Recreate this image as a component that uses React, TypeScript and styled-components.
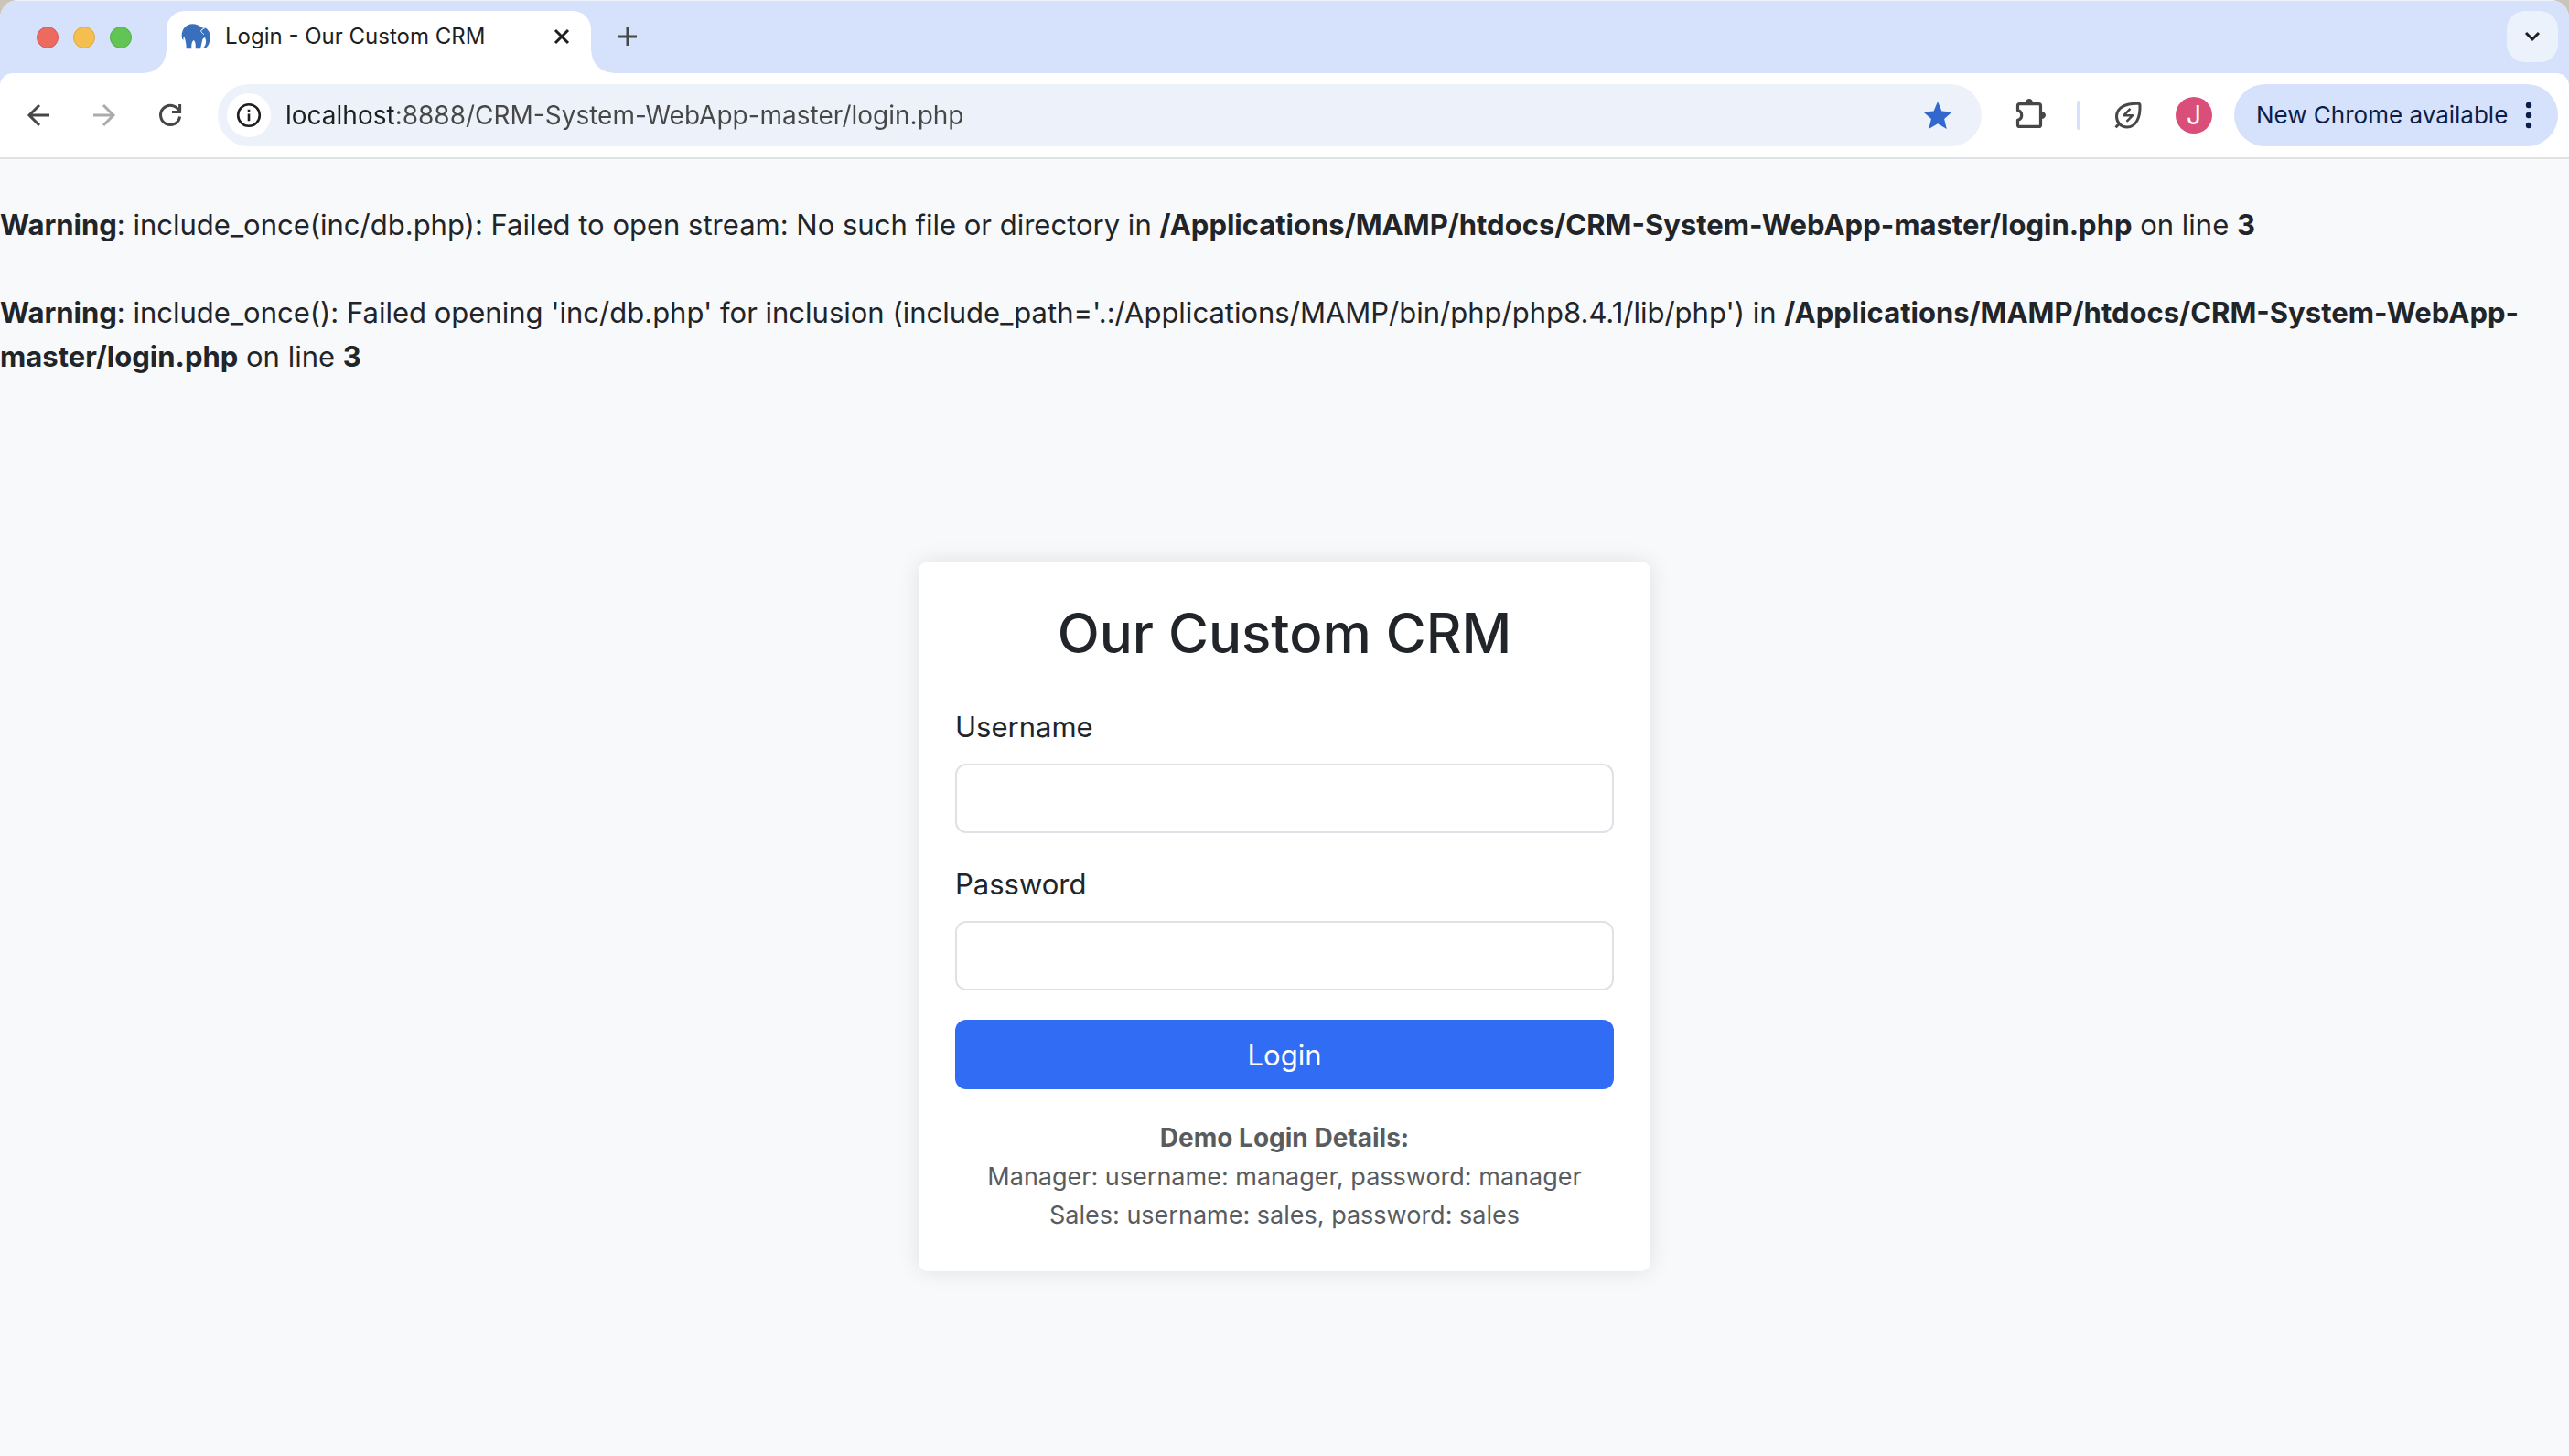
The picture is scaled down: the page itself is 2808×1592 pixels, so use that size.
import React from "react";
import styled, { createGlobalStyle } from "styled-components";

const GlobalStyle = createGlobalStyle`
  *, *::before, *::after { box-sizing: border-box; }
  html, body { margin: 0; background: #cbc5b9; }
  body, button, input { font-family: Inter, "Liberation Sans", sans-serif; }
  button { border: 0; padding: 0; background: none; cursor: pointer; }
`;

const Window = styled.div`
  display: flex;
  flex-direction: column;
  min-height: 100vh;
  overflow: hidden;
  border-radius: 20px 20px 0 0;
  background: #f8f9fb;
  color: #212529;
`;

const TabStrip = styled.header`
  display: flex;
  height: 80px;
  padding: 12px 12px 0 40px;
  background: #d6e1fc;
  box-shadow: inset 0 1px 0 #eef2fb;
`;

const WindowControls = styled.div`
  display: flex;
  align-items: center;
  gap: 16px;
  height: 58px;
  margin-right: 38px;
`;

const Light = styled.button<{ $fill: string; $edge: string }>`
  width: 24px;
  height: 24px;
  border: 1px solid ${(p) => p.$edge};
  border-radius: 50%;
  background: ${(p) => p.$fill};
`;

const Tab = styled.div`
  position: relative;
  display: flex;
  align-items: center;
  gap: 16px;
  width: 464px;
  padding: 0 16px 12px;
  border-radius: 20px 20px 0 0;
  background: #fff;

  &::before, &::after {
    content: "";
    position: absolute;
    bottom: 0;
    width: 24px;
    height: 24px;
  }
  &::before {
    right: 100%;
    background: radial-gradient(circle at 0 0, transparent 23px, #fff 24px);
  }
  &::after {
    left: 100%;
    background: radial-gradient(circle at 100% 0, transparent 23px, #fff 24px);
  }
`;

const TabTitle = styled.span`
  flex: 1;
  font-size: 24px;
  line-height: 32px;
  color: #1f1f1f;
  white-space: nowrap;
`;

const IconButton = styled.button<{ $size?: number; $color?: string }>`
  display: flex;
  flex: none;
  align-items: center;
  justify-content: center;
  width: ${(p) => p.$size ?? 56}px;
  height: ${(p) => p.$size ?? 56}px;
  color: ${(p) => p.$color ?? "#474747"};
`;

const NewTabButton = styled(IconButton)`
  margin-left: 12px;
`;

const TabSearchButton = styled(IconButton)`
  margin-left: auto;
  border-radius: 20px;
  background: #ebf2fc;
`;

const ToolbarBack = styled.div`
  background: #d6e1fc;
`;

const Toolbar = styled.nav`
  display: flex;
  align-items: center;
  gap: 24px;
  padding: 12px 12px 12px 14px;
  border-bottom: 2px solid #dfe2e2;
  border-radius: 14px 14px 0 0;
  background: #fff;
`;

const NavButtons = styled.div`
  display: flex;
  gap: 16px;
`;

const AddressBar = styled.div`
  display: flex;
  flex: 1;
  align-items: center;
  gap: 16px;
  height: 68px;
  padding: 0 20px 0 10px;
  border-radius: 34px;
  background: #edf2fa;
`;

const SiteInfo = styled(IconButton)`
  border-radius: 50%;
  background: #fff;
`;

const AddressInput = styled.input`
  flex: 1;
  min-width: 0;
  padding: 0;
  border: 0;
  outline: 0;
  font-size: 28px;
  line-height: 40px;
  color: #474747;
  background: linear-gradient(90deg, #1f1f1f 118px, #474747 118px);
  background-clip: text;
  -webkit-text-fill-color: transparent;
`;

const Divider = styled.span`
  width: 4px;
  height: 32px;
  border-radius: 2px;
  background: #d6e1fc;
`;

const Avatar = styled.button`
  width: 40px;
  height: 40px;
  border-radius: 50%;
  background: #d94f79;
  color: #fff;
  font-size: 28px;
  line-height: 40px;
`;

const UpdateButton = styled.button`
  display: flex;
  align-items: center;
  justify-content: space-between;
  width: 354px;
  height: 68px;
  padding: 0 28px 0 24px;
  border-radius: 34px;
  background: #d6e1fc;
  color: #0b1d49;
  font-size: 26px;
  line-height: 40px;
  white-space: nowrap;
`;

const Page = styled.main`
  flex: 1;
  padding-top: 48px;
  font-size: 31px;
  line-height: 48px;
`;

const Warning = styled.p`
  margin: 0 0 48px;
`;

const Warnings = styled.section`
  ${Warning}:last-child { margin-bottom: 0; }
`;

const Card = styled.form`
  width: 800px;
  margin: 200px auto;
  padding: 40px;
  border-radius: 10px;
  background: #fff;
  box-shadow: 0 0 24px rgba(0, 0, 0, 0.1);
`;

const CardTitle = styled.h1`
  margin: 0 0 40px;
  font-size: 60px;
  font-weight: 500;
  line-height: 77px;
  text-align: center;
`;

const Field = styled.div`
  display: flex;
  flex-direction: column;
  gap: 16px;
  margin-bottom: 32px;
`;

const FieldInput = styled.input`
  height: 76px;
  padding: 12px 24px;
  border: 2px solid #dee2e6;
  border-radius: 12px;
  background: #fff;
  color: inherit;
  font-size: 31px;
`;

const LoginButton = styled.button`
  display: block;
  width: 100%;
  height: 76px;
  border-radius: 12px;
  background: #316cf4;
  color: #fff;
  font-size: 31px;
`;

const DemoDetails = styled.p`
  margin: 32px 0 0;
  font-size: 27px;
  line-height: 42px;
  text-align: center;
  color: #595c5f;
`;

const DemoHeading = styled.b`
  font-size: 28px;
`;

const ElephantIcon = () => (
  <svg width="32" height="28" viewBox="0 0 96 84" aria-hidden="true">
    <path
      fill="#3a70bb"
      d="M4 52C-4 26 12 1 37 1c13 0 24 5 31 12 4 2 7 1 11-1 11 8 16 18 16 31 0 22-8 36-20 38-3-1-2-4 1-6 6-9 7-20 2-30-5 1-8 5-9 11l-6 26H47c1-14 0-24-6-28-6 4-8 14-7 28H17c0-14-2-24-6-37-1-2-2-3-3-1-1 3-1 6 0 9-2 0-4-2-4-2z"
    />
    <path d="M82 10c-6 6-13 8-16 11-3 4 2 9 9 14" fill="none" stroke="#fff" strokeWidth="3" />
  </svg>
);

const Stroke = ({ d, size = 32, width = 3 }: { d: string; size?: number; width?: number }) => (
  <svg width={size} height={size} viewBox={`0 0 ${size} ${size}`} fill="none" stroke="currentColor" strokeWidth={width} aria-hidden="true">
    <path d={d} />
  </svg>
);

const ReloadIcon = () => (
  <svg width="32" height="32" viewBox="0 0 32 32" fill="none" stroke="currentColor" strokeWidth="3" aria-hidden="true">
    <path d="M25.6 11.2A10.6 10.6 0 1 0 26.600 17.500" />
    <path d="M26.600 4v8.600H18" />
  </svg>
);

const InfoIcon = () => (
  <svg width="28" height="28" viewBox="0 0 28 28" fill="none" stroke="currentColor" strokeWidth="2.6" aria-hidden="true">
    <circle cx="14" cy="14" r="11.8" />
    <path d="M14 12.6v7.6M14 7.800v2.800" />
  </svg>
);

const StarIcon = () => (
  <svg width="32" height="32" viewBox="0 0 32 32" fill="#3367d0" aria-hidden="true">
    <path d="M16 1l4.4 10.6 11.2 1-8.5 7.5L25.8 31 16 25.2 6.200 31l2.700-10.900L.4 12.600l11.200-1z" />
  </svg>
);

const PuzzleIcon = () => (
  <svg width="36" height="36" viewBox="0 0 36 36" fill="none" aria-hidden="true">
    <path
      d="M7.500 5.600h21a2 2 0 0 1 2 2v20.800a2 2 0 0 1-2 2h-21a2 2 0 0 1-2-2v-5.200c2.800-.6 4.200-2.800 4.200-5.200s-1.400-4.600-4.200-5.200V7.600a2 2 0 0 1 2-2z"
      stroke="currentColor"
      strokeWidth="3.200"
      strokeLinejoin="round"
    />
    <path d="M14 4.500a4 4.500 0 0 1 8 0zM31.500 14a4.500 4 0 0 1 0 8z" fill="currentColor" />
  </svg>
);

const LeafIcon = () => (
  <svg width="32" height="32" viewBox="0 0 32 32" fill="none" stroke="currentColor" strokeWidth="3" strokeLinejoin="round" aria-hidden="true">
    <path d="M27 3.300C14 3 3.500 7 3.500 17.500c0 6.500 5 11.500 11.500 11.500C25 29 29.500 18 29 5.300a2 2 0 0 0-2-2zM2.500 29.200l5-5" />
    <path d="M18.500 8.800l-7 7.300 9.300.2-6.300 6.500" strokeWidth="2.600" />
  </svg>
);

const DotsIcon = () => (
  <svg width="8" height="32" viewBox="0 0 8 32" fill="currentColor" aria-hidden="true">
    <circle cx="4" cy="5" r="3.200" />
    <circle cx="4" cy="16" r="3.200" />
    <circle cx="4" cy="27" r="3.200" />
  </svg>
);

const lights = [
  { name: "Close window", fill: "#ec6a5e", edge: "#d8594e" },
  { name: "Minimize window", fill: "#f5bf4f", edge: "#dca83c" },
  { name: "Zoom window", fill: "#61c554", edge: "#51ad45" },
];

export default function App() {
  return (
    <>
      <GlobalStyle />
      <Window>
        <TabStrip>
          <WindowControls>
            {lights.map((light) => (
              <Light key={light.name} aria-label={light.name} $fill={light.fill} $edge={light.edge} />
            ))}
          </WindowControls>
          <Tab>
            <ElephantIcon />
            <TabTitle>Login - Our Custom CRM</TabTitle>
            <IconButton $size={32} $color="#1f1f1f" aria-label="Close tab">
              <Stroke size={24} d="M5 5l14 14M19 5L5 19" />
            </IconButton>
          </Tab>
          <NewTabButton aria-label="New tab">
            <Stroke size={24} d="M12 2v20M2 12h20" />
          </NewTabButton>
          <TabSearchButton $color="#1f1f1f" aria-label="Search tabs">
            <Stroke size={24} d="M5 8l7 7 7-7" />
          </TabSearchButton>
        </TabStrip>

        <ToolbarBack>
          <Toolbar>
            <NavButtons>
              <IconButton aria-label="Back">
                <Stroke d="M28 16H6M17 5L6 16l11 11" />
              </IconButton>
              <IconButton $color="#ababab" aria-label="Forward">
                <Stroke d="M4 16h22M15 5l11 11-11 11" />
              </IconButton>
              <IconButton aria-label="Reload">
                <ReloadIcon />
              </IconButton>
            </NavButtons>
            <AddressBar>
              <SiteInfo $size={48} $color="#1f1f1f" aria-label="View site information">
                <InfoIcon />
              </SiteInfo>
              <AddressInput aria-label="Address" defaultValue="localhost:8888/CRM-System-WebApp-master/login.php" />
              <IconButton aria-label="Edit bookmark">
                <StarIcon />
              </IconButton>
            </AddressBar>
            <IconButton aria-label="Extensions">
              <PuzzleIcon />
            </IconButton>
            <Divider />
            <IconButton aria-label="Energy saver">
              <LeafIcon />
            </IconButton>
            <Avatar aria-label="Profile">J</Avatar>
            <UpdateButton>
              New Chrome available
              <DotsIcon />
            </UpdateButton>
          </Toolbar>
        </ToolbarBack>

        <Page>
          <Warnings>
            <Warning>
              <b>Warning</b>: include_once(inc/db.php): Failed to open stream: No such file or directory in{" "}
              <b>/Applications/MAMP/htdocs/CRM-System-WebApp-master/login.php</b> on line <b>3</b>
            </Warning>
            <Warning>
              <b>Warning</b>: include_once(): Failed opening 'inc/db.php' for inclusion
              (include_path='.:/Applications/MAMP/bin/php/php8.4.1/lib/php') in{" "}
              <b>/Applications/MAMP/htdocs/CRM-System-WebApp-master/login.php</b> on line <b>3</b>
            </Warning>
          </Warnings>
          <Card onSubmit={(event) => event.preventDefault()}>
            <CardTitle>Our Custom CRM</CardTitle>
            <Field>
              <label htmlFor="username">Username</label>
              <FieldInput id="username" type="text" />
            </Field>
            <Field>
              <label htmlFor="password">Password</label>
              <FieldInput id="password" type="password" />
            </Field>
            <LoginButton type="submit">Login</LoginButton>
            <DemoDetails>
              <DemoHeading>Demo Login Details:</DemoHeading>
              <br />
              Manager: username: manager, password: manager
              <br />
              Sales: username: sales, password: sales
            </DemoDetails>
          </Card>
        </Page>
      </Window>
    </>
  );
}
